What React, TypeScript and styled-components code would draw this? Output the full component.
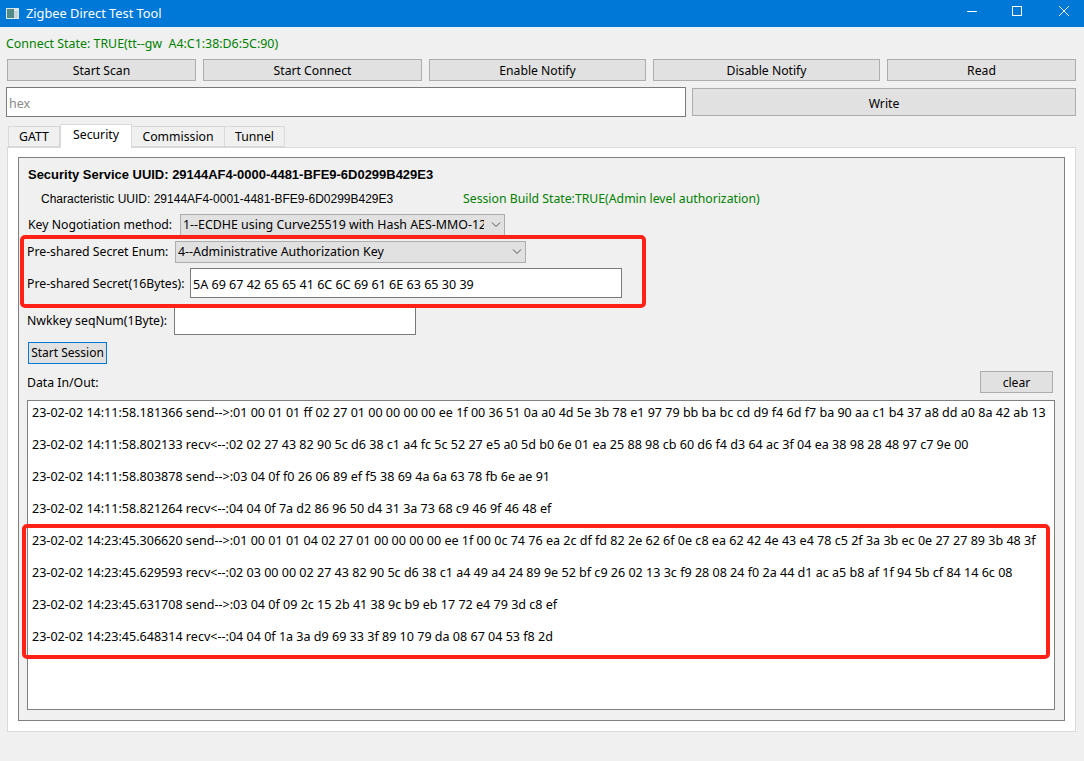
import React from "react"
import styled, { createGlobalStyle } from "styled-components"

const GlobalStyle = createGlobalStyle`
  html, body { margin: 0; padding: 0; background: #f0f0f0; }
  * { box-sizing: border-box; }
  body { font-family: "Noto Sans", "Open Sans", sans-serif; font-size: 12.25px; color: #000; }
`

const Window = styled.div`
  position: relative;
  width: 1084px;
  height: 761px;
  overflow: hidden;
  background: #f0f0f0;
`

const TitleBar = styled.div`
  display: flex;
  align-items: center;
  height: 27px;
  padding-left: 6px;
  background: #0078d7;
  color: #fff;
`

const TitleText = styled.span`
  margin: -2px 0 0 7px;
  font-size: 12.8px;
  flex: 1;
`

const WinButtons = styled.div`
  display: flex;
  gap: 7px;
  margin-top: -5px;
`

const WinButton = styled.div<{ $w?: number }>`
  display: flex;
  align-items: center;
  justify-content: center;
  width: ${(p) => p.$w ?? 40}px;
  height: 27px;
`

const Body = styled.div`
  display: flex;
  flex-direction: column;
  padding: 0 8px 0 7px;
`

const ConnectState = styled.div`
  margin: 8px 0 0 -1px;
  height: 18px;
  line-height: 18px;
  font-size: 12.4px;
  color: #008000;
  white-space: pre;
`

const ButtonRow = styled.div`
  display: grid;
  grid-template-columns: 189px 219px 217px 227px 189px;
  gap: 7px;
  margin-top: 6px;
`

const PushButton = styled.button<{ $h?: number; $w?: number; $focus?: boolean; $low?: boolean }>`
  height: ${(p) => p.$h ?? 22}px;
  width: ${(p) => (p.$w ? `${p.$w}px` : "100%")};
  padding: ${(p) => (p.$low ? "2px 0 0" : p.$focus ? "0 0 2px" : "0")};
  background: #e1e1e1;
  border: 1px solid ${(p) => (p.$focus ? "#0078d7" : "#adadad")};
  font-family: inherit;
  font-size: ${(p) => (p.$focus ? 12 : 12.2)}px;
  color: #000;
`

const WriteRow = styled.div`
  display: flex;
  align-items: center;
  margin: 6px 0 0 -1px;
  gap: 6px;
`

const TextField = styled.input<{ $w: number; $h: number }>`
  display: block;
  flex: none;
  width: ${(p) => p.$w}px;
  height: ${(p) => p.$h}px;
  padding: 2px 2px 0;
  background: #fff;
  border: 1px solid #7a7a7a;
  border-radius: 0;
  outline: none;
  font-family: inherit;
  font-size: 12.55px;
  color: #000;
  &::placeholder { color: #8a8a8a; opacity: 1; }
`

const Tabs = styled.div`
  display: flex;
  align-items: flex-end;
  height: 24px;
  margin: 6px 0 0 1px;
`

const Tab = styled.div<{ $w: number; $active?: boolean }>`
  position: relative;
  z-index: ${(p) => (p.$active ? 1 : 0)};
  width: ${(p) => p.$w}px;
  height: ${(p) => (p.$active ? 24 : 21)}px;
  margin-bottom: ${(p) => (p.$active ? -1 : 0)}px;
  line-height: ${(p) => (p.$active ? 19 : 20)}px;
  text-align: center;
  background: ${(p) => (p.$active ? "#fff" : "#f0f0f0")};
  border: 1px solid #d9d9d9;
  border-bottom: ${(p) => (p.$active ? "none" : "1px solid #d9d9d9")};
  border-left: ${(p) => (p.$active ? "1px solid #d9d9d9" : "none")};
  &:first-child { border-left: 1px solid #d9d9d9; }
`

const TabPane = styled.div`
  height: 585px;
  padding: 9px 10px 10px 10px;
  background: #fff;
  border: 1px solid #d9d9d9;
`

const Group = styled.div`
  display: flex;
  flex-direction: column;
  height: 564px;
  padding: 7px 9px 9px 8px;
  background: #f0f0f0;
  border: 1px solid #808080;
`

const Row = styled.div<{ $h: number; $top: number; $left?: number }>`
  display: flex;
  align-items: center;
  flex: none;
  height: ${(p) => p.$h}px;
  margin-top: ${(p) => p.$top}px;
  margin-left: ${(p) => p.$left ?? 0}px;
`

const ServiceTitle = styled.span`
  margin-left: 1px;
  font-family: "Liberation Sans", Arial, sans-serif;
  font-size: 12.97px;
  font-weight: bold;
`

const CharText = styled.span`
  width: 422px;
  font-family: "Liberation Sans", Arial, sans-serif;
  font-size: 12px;
`

const GreenText = styled.span`
  padding-bottom: 2px;
  color: #008000;
`

const Label = styled.label<{ $w: number; $raised?: boolean }>`
  flex: none;
  width: ${(p) => p.$w}px;
  padding-bottom: ${(p) => (p.$raised ? 2 : 0)}px;
`

const Select = styled.div<{ $w: number }>`
  display: flex;
  align-items: center;
  flex: none;
  width: ${(p) => p.$w}px;
  height: 22px;
  padding: 0 1px 0 2px;
  background: #e1e1e1;
  border: 1px solid #adadad;
  font-size: 12.4px;
`

const SelectValue = styled.span`
  flex: 1;
  padding-bottom: 2px;
  overflow: hidden;
  white-space: nowrap;
`

const Chevron = styled.svg`
  flex: none;
  margin: 0 2px 0 7px;
`

const DataRow = styled(Row)`
  justify-content: space-between;
  padding-right: 2px;
`

const LogBox = styled.div`
  flex: none;
  height: 310px;
  margin-top: 7px;
  padding: 3px 0 0 4px;
  background: #fff;
  border: 1px solid #808080;
  overflow: hidden;
  font-size: 12.56px;
`

const LogLine = styled.div`
  height: 32px;
  line-height: 18px;
  white-space: pre;
`

const Annotation = styled.div<{ $x: number; $y: number; $w: number; $h: number }>`
  position: absolute;
  left: ${(p) => p.$x}px;
  top: ${(p) => p.$y}px;
  width: ${(p) => p.$w}px;
  height: ${(p) => p.$h}px;
  border: 4px solid #ff2116;
  border-radius: 5px;
  pointer-events: none;
`

const logLines = [
  "23-02-02 14:11:58.181366 send-->:01 00 01 01 ff 02 27 01 00 00 00 00 ee 1f 00 36 51 0a a0 4d 5e 3b 78 e1 97 79 bb ba bc cd d9 f4 6d f7 ba 90 aa c1 b4 37 a8 dd a0 8a 42 ab 13",
  "23-02-02 14:11:58.802133 recv<--:02 02 27 43 82 90 5c d6 38 c1 a4 fc 5c 52 27 e5 a0 5d b0 6e 01 ea 25 88 98 cb 60 d6 f4 d3 64 ac 3f 04 ea 38 98 28 48 97 c7 9e 00",
  "23-02-02 14:11:58.803878 send-->:03 04 0f f0 26 06 89 ef f5 38 69 4a 6a 63 78 fb 6e ae 91",
  "23-02-02 14:11:58.821264 recv<--:04 04 0f 7a d2 86 96 50 d4 31 3a 73 68 c9 46 9f 46 48 ef",
  "23-02-02 14:23:45.306620 send-->:01 00 01 01 04 02 27 01 00 00 00 00 ee 1f 00 0c 74 76 ea 2c df fd 82 2e 62 6f 0e c8 ea 62 42 4e 43 e4 78 c5 2f 3a 3b ec 0e 27 27 89 3b 48 3f",
  "23-02-02 14:23:45.629593 recv<--:02 03 00 00 02 27 43 82 90 5c d6 38 c1 a4 49 a4 24 89 9e 52 bf c9 26 02 13 3c f9 28 08 24 f0 2a 44 d1 ac a5 b8 af 1f 94 5b cf 84 14 6c 08",
  "23-02-02 14:23:45.631708 send-->:03 04 0f 09 2c 15 2b 41 38 9c b9 eb 17 72 e4 79 3d c8 ef",
  "23-02-02 14:23:45.648314 recv<--:04 04 0f 1a 3a d9 69 33 3f 89 10 79 da 08 67 04 53 f8 2d",
]

const tabs = [
  { name: "GATT", w: 52 },
  { name: "Security", w: 72, active: true },
  { name: "Commission", w: 93 },
  { name: "Tunnel", w: 60 },
]

function ChevronIcon() {
  return (
    <Chevron width="10" height="6" viewBox="0 0 10 6" fill="none" stroke="#505050" strokeWidth="1">
      <path d="M1 0.5 L5 4.5 L9 0.5" />
    </Chevron>
  )
}

function AppIcon() {
  return (
    <svg width="13" height="11" viewBox="0 0 13 11">
      <rect width="13" height="11" fill="#dfe6ea" />
      <rect x="1" y="1" width="7" height="9" fill="#4f8a86" />
      <rect x="8" y="3" width="4" height="7" fill="#c9d4da" />
    </svg>
  )
}

export default function App() {
  return (
    <Window>
      <GlobalStyle />
      <TitleBar>
        <AppIcon />
        <TitleText>Zigbee Direct Test Tool</TitleText>
        <WinButtons>
          <WinButton $w={36}>
            <svg width="10" height="10" viewBox="0 0 10 10" stroke="#fff" strokeWidth="1">
              <path d="M0 5.5 H10" />
            </svg>
          </WinButton>
          <WinButton>
            <svg width="10" height="10" viewBox="0 0 10 10" fill="none" stroke="#fff" strokeWidth="1">
              <rect x="0.5" y="0.5" width="9" height="9" />
            </svg>
          </WinButton>
          <WinButton>
            <svg width="10" height="10" viewBox="0 0 10 10" stroke="#fff" strokeWidth="1">
              <path d="M0 0 L10 10 M10 0 L0 10" />
            </svg>
          </WinButton>
        </WinButtons>
      </TitleBar>
      <Body>
        <ConnectState>{"Connect State: TRUE(tt--gw  A4:C1:38:D6:5C:90)"}</ConnectState>
        <ButtonRow>
          <PushButton>Start Scan</PushButton>
          <PushButton>Start Connect</PushButton>
          <PushButton>Enable Notify</PushButton>
          <PushButton>Disable Notify</PushButton>
          <PushButton>Read</PushButton>
        </ButtonRow>
        <WriteRow>
          <TextField $w={680} $h={30} placeholder="hex" />
          <PushButton $h={28} $w={384} $low>Write</PushButton>
        </WriteRow>
        <Tabs>
          {tabs.map((t) => (
            <Tab key={t.name} $w={t.w} $active={t.active}>{t.name}</Tab>
          ))}
        </Tabs>
        <TabPane>
          <Group>
            <Row $h={18} $top={0}>
              <ServiceTitle>Security Service UUID: 29144AF4-0000-4481-BFE9-6D0299B429E3</ServiceTitle>
            </Row>
            <Row $h={18} $top={7} $left={14}>
              <CharText>Characteristic UUID: 29144AF4-0001-4481-BFE9-6D0299B429E3</CharText>
              <GreenText>Session Build State:TRUE(Admin level authorization)</GreenText>
            </Row>
            <Row $h={22} $top={6} $left={1}>
              <Label $w={152} $raised>Key Nogotiation method:</Label>
              <Select $w={325}>
                <SelectValue>1--ECDHE using Curve25519 with Hash AES-MMO-128 and</SelectValue>
                <ChevronIcon />
              </Select>
            </Row>
            <Row $h={22} $top={5}>
              <Label $w={148} $raised>Pre-shared Secret Enum:</Label>
              <Select $w={351}>
                <SelectValue>4--Administrative Authorization Key</SelectValue>
                <ChevronIcon />
              </Select>
            </Row>
            <Row $h={30} $top={5}>
              <Label $w={163}>Pre-shared Secret(16Bytes):</Label>
              <TextField $w={432} $h={30} readOnly value="5A 69 67 42 65 65 41 6C 6C 69 61 6E 63 65 30 39" />
            </Row>
            <Row $h={30} $top={7}>
              <Label $w={147}>Nwkkey seqNum(1Byte):</Label>
              <TextField $w={242} $h={30} readOnly value="" />
            </Row>
            <Row $h={22} $top={7} $left={1}>
              <PushButton $w={79} $h={22} $focus>Start Session</PushButton>
            </Row>
            <DataRow $h={22} $top={7}>
              <Label $w={100}>Data In/Out:</Label>
              <PushButton $w={73} $h={22}>clear</PushButton>
            </DataRow>
            <LogBox>
              {logLines.map((line) => (
                <LogLine key={line}>{line}</LogLine>
              ))}
            </LogBox>
          </Group>
        </TabPane>
      </Body>
      <Annotation $x={20} $y={235} $w={626} $h={73} />
      <Annotation $x={22} $y={524} $w={1028} $h={135} />
    </Window>
  )
}
